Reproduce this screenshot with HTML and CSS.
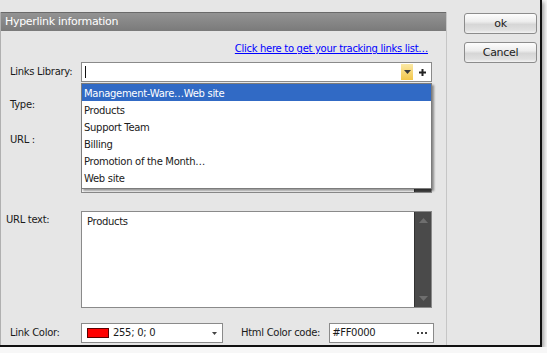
FILE: index.html
```html
<!DOCTYPE html>
<html>
<head>
  <title>Hyperlink information</title>
  <link rel="stylesheet" href="styles.css">
</head>
<body>
  <div class="window">
    <div class="panel">
      <div class="panel-head">Hyperlink information</div>
      <div class="panel-body">
        <div class="link-row"><a href="#">Click here to get your tracking links list…</a></div>

        <div class="row row-lib">
          <label>Links Library:</label>
          <div class="field lib">
            <span class="caret"></span>
            <span class="drop-btn">
              <svg width="7" height="4" viewBox="0 0 7 4"><path d="M0 0H7L3.5 4Z" fill="#3a3a3a"/></svg>
            </span>
            <span class="plus">
              <svg width="7" height="7" viewBox="0 0 7 7"><path d="M3.5 0V7M0 3.5H7" stroke="#222" stroke-width="2"/></svg>
            </span>
          </div>
        </div>

        <div class="row row-type">
          <label>Type:</label>
          <div class="field combo"></div>
        </div>

        <div class="row row-url">
          <label>URL :</label>
          <div class="field box url-box"><div class="scroll"></div></div>
        </div>

        <div class="row row-text">
          <label class="tight">URL text:</label>
          <div class="field box text-box">
            <span class="box-text">Products</span>
            <div class="scroll">
              <svg width="9" height="5" viewBox="0 0 9 5"><path d="M0 5H9L4.5 0Z" fill="#6e6e6e"/></svg>
              <svg width="9" height="5" viewBox="0 0 9 5"><path d="M0 0H9L4.5 5Z" fill="#6e6e6e"/></svg>
            </div>
          </div>
        </div>

        <div class="row row-color">
          <label>Link Color:</label>
          <div class="field color-combo">
            <span class="swatch"></span>
            <span class="color-val">255; 0; 0</span>
            <svg class="arrow" width="5" height="3" viewBox="0 0 5 3"><path d="M0 0H5L2.5 3Z" fill="#444"/></svg>
          </div>
          <label class="code-label">Html Color code:</label>
          <div class="field code">
            <span class="color-val">#FF0000</span>
            <span class="dots"><i></i><i></i><i></i></span>
          </div>
        </div>

        <ul class="menu">
          <li class="active">Management-Ware…Web site</li>
          <li>Products</li>
          <li>Support Team</li>
          <li>Billing</li>
          <li>Promotion of the Month…</li>
          <li>Web site</li>
        </ul>
      </div>
    </div>

    <div class="side">
      <button class="btn">ok</button>
      <button class="btn">Cancel</button>
    </div>
  </div>
</body>
</html>
```

FILE: styles.css
```css
body {
  margin: 0;
  background: #f7f7f7;
  font-family: "DejaVu Sans", sans-serif;
  font-size: 10px;
  letter-spacing: -0.3px;
  color: #1a1a1a;
}

.window {
  width: 540px;
  height: 345px;
  background: #e6e6e6;
  border-right: 2px solid #111;
  border-bottom: 2px solid #111;
  box-shadow: 2px 2px 4px rgba(0, 0, 0, 0.35);
  display: flex;
  overflow: hidden;
}

.panel {
  width: 445px;
  margin-top: 12px;
  border-left: 1px solid #b0b0b0;
  border-right: 1px solid #c6c6c6;
  display: flex;
  flex-direction: column;
}

.panel-head {
  height: 18px;
  line-height: 18px;
  border-top: 1px solid #6a6a6a;
  background: linear-gradient(#939393, #7a7a7a);
  color: #fff;
  font-size: 11px;
  padding-left: 4px;
}

.panel-body {
  position: relative;
  flex: 1;
}

.link-row {
  margin-top: 11px;
  height: 14px;
  line-height: 14px;
  text-align: right;
  padding-right: 18px;
}

.link-row a {
  color: #0000ff;
  text-decoration: underline;
}

.row {
  display: flex;
  align-items: flex-start;
}

.row label {
  width: 71px;
  padding-left: 9px;
  line-height: 20px;
}

.row label.tight {
  width: 75px;
  padding-left: 5px;
}

.field {
  width: 349px;
  height: 18px;
  background: #fff;
  border: 1px solid #8a8a8a;
  position: relative;
}

.row-lib { margin-top: 6px; }
.row-type { margin-top: 12px; }
.row-url { margin-top: 13px; }
.row-text { margin-top: 18px; }
.row-color { margin-top: 15px; }

.row-type label { line-height: 20px; padding-top: 1px; }
.row-url label { line-height: 14px; padding-top: 5px; }
.row-text label { line-height: 14px; padding-top: 2px; }

.lib {
  display: flex;
  align-items: center;
}

.caret {
  width: 1px;
  height: 12px;
  background: #111;
  margin-left: 3px;
}

.drop-btn {
  margin-left: auto;
  width: 12px;
  height: 16px;
  background: linear-gradient(#fbe9a6, #f3c64a);
  display: flex;
  align-items: center;
  justify-content: center;
}

.plus {
  width: 18px;
  display: flex;
  justify-content: center;
}

.url-box { height: 63px; }
.text-box { height: 95px; }

.box-text {
  display: block;
  padding: 4px 0 0 5px;
}

.scroll {
  position: absolute;
  right: 0;
  top: 0;
  bottom: 0;
  width: 17px;
  background: #4a4a4a;
  border-left: 1px solid #333;
  display: flex;
  flex-direction: column;
  align-items: center;
  justify-content: space-between;
  padding: 6px 0;
  box-sizing: border-box;
}

.color-combo {
  width: 140px;
  display: flex;
  align-items: center;
}

.swatch {
  width: 20px;
  height: 8px;
  background: #ff0000;
  border: 1px solid #5a0000;
  margin-left: 5px;
}

.color-val {
  margin-left: 4px;
  line-height: 18px;
}

.arrow {
  margin-left: auto;
  margin-right: 5px;
}

.row label.code-label {
  width: auto;
  padding-left: 0;
  margin-left: 18px;
  margin-right: 9px;
}

.code {
  width: 103px;
  display: flex;
  align-items: center;
}

.code .color-val { margin-left: 2px; }

.dots {
  margin-left: auto;
  margin-right: 6px;
  display: flex;
  gap: 2px;
}

.dots i {
  width: 2px;
  height: 2px;
  background: #444;
}

.menu {
  position: absolute;
  top: 52px;
  left: 80px;
  width: 349px;
  margin: 0;
  padding: 0 0 2px;
  list-style: none;
  background: #fff;
  border: 1px solid #7c7c7c;
  box-shadow: 2px 2px 2px rgba(0, 0, 0, 0.4);
}

.menu li {
  height: 16px;
  line-height: 17px;
  padding: 1px 0 0 2px;
}

.menu li.active {
  background: #316ac5;
  color: #fff;
}

.side {
  display: flex;
  flex-direction: column;
  gap: 8px;
  padding: 13px 0 0 17px;
}

.btn {
  width: 73px;
  height: 21px;
  border: 1px solid #8c8c8c;
  border-radius: 3px;
  background: linear-gradient(#fdfdfd, #ededed 40%, #d6d6d6 55%, #e0e0e0 85%, #f3f3f3);
  font-family: "DejaVu Sans", sans-serif;
  font-size: 11px;
  letter-spacing: -0.3px;
  color: #222;
  padding: 0;
}
```
